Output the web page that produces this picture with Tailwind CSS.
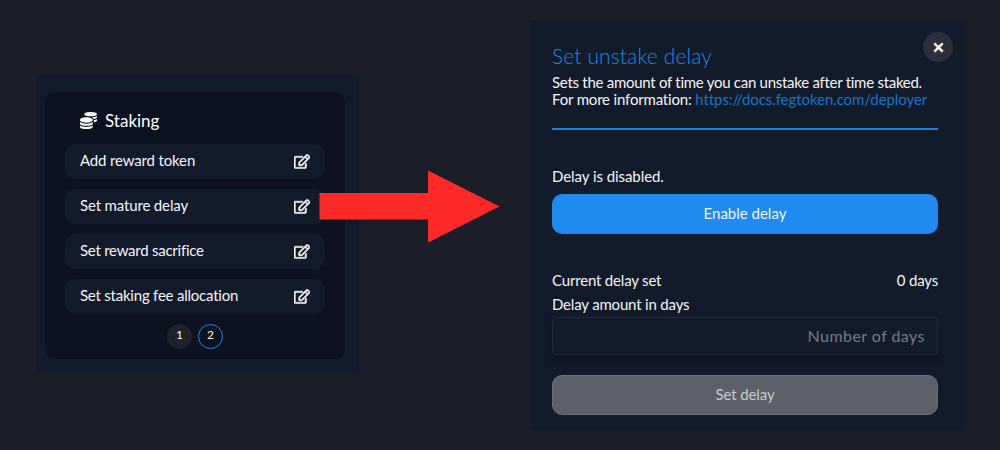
<!DOCTYPE html>
<html lang="en">
<head>
<meta charset="utf-8">
<title>Staking</title>
<script src="https://cdn.jsdelivr.net/npm/@tailwindcss/browser@4"></script>
</head>
<body class="w-[1000px] h-[450px] overflow-hidden bg-[#1b1e29] font-['Lato',sans-serif] text-[15px] leading-[17px] text-[#f4f5f7]">
<svg class="hidden">
  <symbol id="edit" viewBox="0 0 576 512"><path fill="currentColor" stroke="currentColor" stroke-width="20" d="M402.3 344.9l32-32c5-5 13.7-1.5 13.7 5.7V464c0 26.5-21.5 48-48 48H48c-26.5 0-48-21.5-48-48V112c0-26.5 21.5-48 48-48h273.5c7.1 0 10.7 8.6 5.7 13.7l-32 32c-1.5 1.5-3.5 2.3-5.7 2.3H48v352h352V350.5c0-2.1.8-4.1 2.3-5.6zm156.6-201.8L296.3 405.7l-90.4 10c-26.2 2.9-48.5-19.2-45.6-45.6l10-90.4L432.9 17.1c22.9-22.9 59.9-22.9 82.7 0l43.2 43.2c22.9 22.9 22.9 60 .1 82.8zM460.1 174L402 115.9 216.2 301.8l-7.3 65.3 65.3-7.3L460.1 174zm64.8-79.7l-43.2-43.2c-4.1-4.1-10.8-4.1-14.8 0L436 82l58.1 58.1 30.9-30.9c4-4.2 4-10.8-.1-14.9z"/></symbol>
</svg>
<main class="relative flex items-start h-[450px] pl-9 pt-5">
  <section class="mt-[55px] w-[323px] h-[299px] bg-[#121b29] pl-[9px] pt-[17px]">
    <div class="w-[300px] h-[267px] rounded-[10px] bg-[#0c121f] px-5 pt-[18px]">
      <h2 class="flex items-center h-[21px] pl-[15px] gap-2 text-[17px] text-white">
        <svg class="w-[17px] h-[17px]" viewBox="0 0 512 512"><path fill="currentColor" d="M0 405.3V448c0 35.3 86 64 192 64s192-28.700 192-64v-42.700C342.700 434.400 267.200 448 192 448S41.300 434.400 0 405.300zM320 128c106 0 192-28.700 192-64S426 0 320 0 128 28.700 128 64s86 64 192 64zM0 300.400V352c0 35.300 86 64 192 64s192-28.700 192-64v-51.600c-41.300 34-116.900 51.600-192 51.600S41.300 334.400 0 300.400zm416 11c57.300-11.100 96-31.700 96-55.400v-42.700c-23.200 16.400-57.300 27.600-96 34.500v63.600zM192 160C86 160 0 195.800 0 240s86 80 192 80 192-35.800 192-80-86-80-192-80zm219.300 56.300c60-10.800 100.700-32 100.700-56.300v-42.700c-35.500 25.100-96.500 38.600-160.700 41.800 29.500 14.300 51.200 33.500 60 57.200z"/></svg>
        <span>Staking</span>
      </h2>
      <ul class="mt-[13px] flex flex-col gap-[10px]">
        <li class="flex items-center justify-between h-[35px] rounded-[10px] bg-[#121b29] px-[15px]"><span class="-mt-[3px] tracking-[-0.15px]">Add reward token</span><svg class="w-4 h-[15px] -mt-px overflow-visible"><use href="#edit"/></svg></li>
        <li class="flex items-center justify-between h-[35px] rounded-[10px] bg-[#121b29] px-[15px]"><span class="-mt-[3px] tracking-[-0.15px]">Set mature delay</span><svg class="w-4 h-[15px] -mt-px overflow-visible"><use href="#edit"/></svg></li>
        <li class="flex items-center justify-between h-[35px] rounded-[10px] bg-[#121b29] px-[15px]"><span class="-mt-[3px] tracking-[-0.25px]">Set reward sacrifice</span><svg class="w-4 h-[15px] -mt-px overflow-visible"><use href="#edit"/></svg></li>
        <li class="flex items-center justify-between h-[35px] rounded-[10px] bg-[#121b29] px-[15px]"><span class="-mt-[3px] tracking-[-0.22px]">Set staking fee allocation</span><svg class="w-4 h-[15px] -mt-px overflow-visible"><use href="#edit"/></svg></li>
      </ul>
      <nav class="mt-[10px] flex justify-center gap-[6px] text-xs">
        <span class="flex items-center justify-center size-[25px] rounded-full bg-[#1e222d] pb-[3px]">1</span>
        <span class="flex items-center justify-center size-[25px] rounded-full border border-[#1e88e5] pb-[3px]">2</span>
      </nav>
    </div>
  </section>
  <section class="relative ml-[171px] w-[435px] h-[411px] bg-[#121b29] pl-[22px] pr-[27px] pt-6">
    <button class="absolute right-3 top-3 flex items-center justify-center size-[30px] rounded-full bg-[#2b2f39]"><svg class="size-[11px]" viewBox="0 0 11 11"><path d="M1.3 1.3 9.7 9.7M9.7 1.3 1.3 9.7" stroke="#fff" stroke-width="2.5"/></svg></button>
    <h1 class="text-[21px] leading-6 font-light tracking-[0.12px] text-[#1e88ec]">Set unstake delay</h1>
    <p class="mt-[6px]"><span class="tracking-[-0.27px]">Sets the amount of time you can unstake after time staked.</span><br><span class="tracking-[-0.17px]">For more information: </span><a class="tracking-[-0.07px] text-[#1a74cb]">https://docs.fegtoken.com/deployer</a></p>
    <hr class="mt-5 border-0 h-[2px] bg-[#1c7fdd]">
    <p class="mt-[38px] tracking-[-0.06px]">Delay is disabled.</p>
    <button class="mt-[9px] block w-full h-10 rounded-[10px] bg-[#1f8aef] pb-[2px]">Enable delay</button>
    <div class="mt-[38px] flex justify-between tracking-[-0.18px]"><span>Current delay set</span><span>0 days</span></div>
    <label class="mt-[7px] block tracking-[-0.18px]">Delay amount in days</label>
    <div class="mt-1 flex items-center justify-end h-[38px] rounded-[4px] border border-[#242c39] bg-[#121b29] px-3 text-base tracking-[0.45px] text-[#777c85] shadow-[0_4px_8px_rgba(0,0,0,0.3)]"><span>Number of days</span></div>
    <button class="relative mt-5 block w-full h-10 rounded-[10px] border border-[#6b6f78] bg-[#5c606a] pb-[2px] tracking-[-0.1px] text-[#c8cbd0]">Set delay</button>
  </section>
  <svg class="absolute left-[319px] top-[170px] w-[181px] h-[73px]" viewBox="0 0 181 73"><path fill="#ff2a28" d="M.5 23H109V.5L180.500 36.500 109 72.500V49.500H.5z"/></svg>
</main>
</body>
</html>
